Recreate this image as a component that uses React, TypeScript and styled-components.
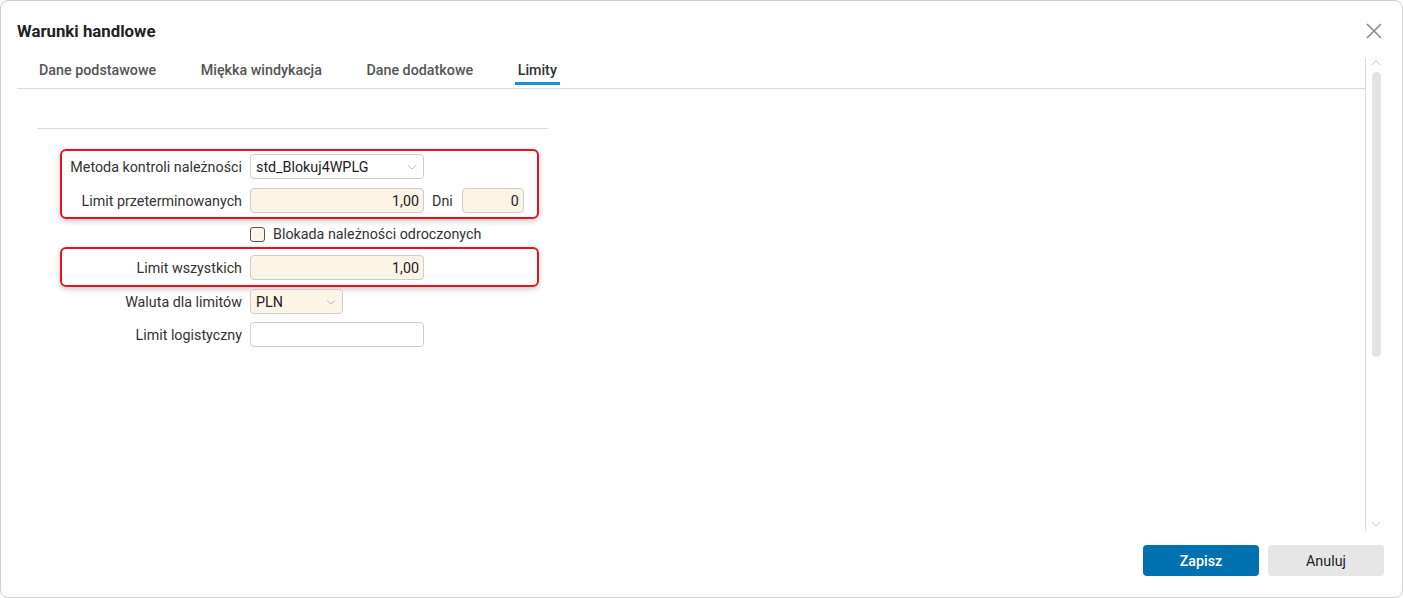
import React from "react";
import styled, { createGlobalStyle } from "styled-components";

const Global = createGlobalStyle`
  html, body { margin: 0; padding: 0; background: #ffffff; }
  body { font-family: Roboto, "Liberation Sans", Arial, sans-serif; color: #333; }
  * { box-sizing: border-box; }
`;

const Dialog = styled.div`
  width: 1403px;
  height: 598px;
  border: 1px solid #cfcfcf;
  border-radius: 8px;
  background: #fff;
  display: flex;
  flex-direction: column;
  position: relative;
`;

const Header = styled.div`
  height: 56px;
  padding: 20px 16px 0 16px;
  display: flex;
  justify-content: space-between;
  align-items: flex-start;
`;

const Title = styled.h1`
  margin: 0;
  font-size: 16.8px;
  line-height: 20px;
  font-weight: 700;
  color: #222;
`;

const CloseButton = styled.button`
  border: 0;
  background: none;
  padding: 0;
  margin: 1px 3px 0 0;
  width: 18px;
  height: 18px;
  cursor: pointer;
  display: flex;
  align-items: center;
  justify-content: center;
`;

const Middle = styled.div`
  flex: 1;
  display: flex;
  margin: 0 16px 0 16px;
  min-height: 0;
`;

const Content = styled.div`
  flex: 1;
  display: flex;
  flex-direction: column;
`;

const TabBar = styled.div`
  height: 32px;
  border-bottom: 1px solid #dcdcdc;
  display: flex;
  align-items: stretch;
  padding-left: 19px;
`;

const Tab = styled.div<{ $active?: boolean }>`
  margin-right: 38.5px;
  padding: 5px 3px 0 3px;
  font-size: 14.3px;
  line-height: 17px;
  font-weight: 500;
  color: ${(p) => (p.$active ? "#333" : "#555")};
  position: relative;
  white-space: nowrap;
  &::after {
    content: "";
    position: absolute;
    left: 0;
    right: 0;
    bottom: 3px;
    height: 3px;
    background: ${(p) => (p.$active ? "#1a8fd6" : "transparent")};
  }
`;

const Body = styled.div`
  padding: 39px 0 0 20px;
`;

const Separator = styled.div`
  width: 511px;
  height: 1px;
  background: #dcdcdc;
  margin-bottom: 20px;
`;

const Form = styled.div`
  margin-left: 23px;
  display: flex;
  flex-direction: column;
`;

const Highlight = styled.div<{ $pad: string; $mb: number }>`
  width: 479px;
  border: 2px solid #e8121b;
  border-radius: 6px;
  box-shadow: 0 2px 6px rgba(0, 0, 0, 0.22);
  padding: ${(p) => p.$pad};
  display: flex;
  flex-direction: column;
  gap: 9px;
  margin-bottom: ${(p) => p.$mb}px;
`;

const Row = styled.div<{ $mb?: number; $inset?: boolean }>`
  display: flex;
  align-items: center;
  gap: 8px;
  height: 25px;
  margin-bottom: ${(p) => p.$mb ?? 0}px;
  padding-left: ${(p) => (p.$inset ? 0 : 2)}px;
`;

const Label = styled.span`
  width: 180px;
  text-align: right;
  font-size: 14.3px;
  color: #333;
  white-space: nowrap;
`;

const Field = styled.div<{ $w: number; $beige?: boolean; $right?: boolean }>`
  width: ${(p) => p.$w}px;
  height: 25px;
  border: 1px solid #cdcdcd;
  border-radius: 4px;
  background: ${(p) => (p.$beige ? "#fcf4e6" : "#fff")};
  display: flex;
  align-items: center;
  justify-content: ${(p) => (p.$right ? "flex-end" : "space-between")};
  padding: 0 4px 0 5px;
  font-size: 14.3px;
  color: #222;
`;

const Chevron = styled.svg`
  width: 10px;
  height: 10px;
  margin-right: 2px;
`;

const SmallLabel = styled.span`
  font-size: 14.3px;
  color: #333;
  margin: 0 1px 0 0;
`;

const CheckRow = styled.label`
  display: flex;
  align-items: center;
  gap: 8px;
  height: 16px;
  margin: 7px 0 5px 190px;
  font-size: 14.3px;
  color: #333;
  white-space: nowrap;
`;

const Box = styled.span`
  width: 15px;
  height: 15px;
  border: 1px solid #555;
  border-radius: 3px;
  background: #fcf4e6;
`;

const ScrollCol = styled.div`
  width: 21px;
  height: 473px;
  margin-top: 1px;
  border-left: 1px solid #dcdcdc;
  position: relative;
  display: flex;
  flex-direction: column;
  align-items: center;
`;

const ArrowIcon = styled.svg`
  width: 10px;
  height: 6px;
`;

const Thumb = styled.div`
  width: 9px;
  height: 285px;
  border-radius: 5px;
  background: #e3e3e3;
  margin: 6px 0 0 0;
`;

const Spacer = styled.div`
  flex: 1;
`;

const Footer = styled.div`
  height: 69px;
  display: flex;
  justify-content: flex-end;
  align-items: flex-start;
  gap: 9px;
  padding: 17px 18px 0 0;
`;

const Button = styled.button<{ $primary?: boolean }>`
  width: 116px;
  height: 31px;
  border: 0;
  border-radius: 4px;
  font-family: inherit;
  font-size: 14.3px;
  font-weight: ${(p) => (p.$primary ? 500 : 400)};
  background: ${(p) => (p.$primary ? "#0071b0" : "#e6e6e6")};
  color: ${(p) => (p.$primary ? "#fff" : "#222")};
`;

const Down = () => (
  <Chevron viewBox="0 0 10 10">
    <path d="M1 3.5 L5 7 L9 3.5" fill="none" stroke="#bbb" strokeWidth="1" />
  </Chevron>
);

export default function App() {
  return (
    <>
      <Global />
      <Dialog>
        <Header>
          <Title>Warunki handlowe</Title>
          <CloseButton aria-label="close">
            <svg width="16" height="16" viewBox="0 0 16 16">
              <path d="M1 1 L15 15 M15 1 L1 15" stroke="#8a8a8a" strokeWidth="1.6" fill="none" />
            </svg>
          </CloseButton>
        </Header>
        <Middle>
          <Content>
            <TabBar>
              <Tab>Dane podstawowe</Tab>
              <Tab>Miękka windykacja</Tab>
              <Tab>Dane dodatkowe</Tab>
              <Tab $active>Limity</Tab>
            </TabBar>
            <Body>
              <Separator />
              <Form>
                <Highlight $pad="3px 0 4px 0" $mb={0}>
                  <Row $inset>
                    <Label>Metoda kontroli należności</Label>
                    <Field $w={174}>
                      <span>std_Blokuj4WPLG</span>
                      <Down />
                    </Field>
                  </Row>
                  <Row $inset>
                    <Label>Limit przeterminowanych</Label>
                    <Field $w={174} $beige $right>1,00</Field>
                    <SmallLabel>Dni</SmallLabel>
                    <Field $w={62} $beige $right>0</Field>
                  </Row>
                </Highlight>
                <CheckRow>
                  <Box />
                  Blokada należności odroczonych
                </CheckRow>
                <Highlight $pad="6px 0 5px 0" $mb={2}>
                  <Row $inset>
                    <Label>Limit wszystkich</Label>
                    <Field $w={174} $beige $right>1,00</Field>
                  </Row>
                </Highlight>
                <Row $mb={8}>
                  <Label>Waluta dla limitów</Label>
                  <Field $w={93} $beige>
                    <span>PLN</span>
                    <Down />
                  </Field>
                </Row>
                <Row>
                  <Label>Limit logistyczny</Label>
                  <Field $w={174} />
                </Row>
              </Form>
            </Body>
          </Content>
          <ScrollCol>
            <ArrowIcon viewBox="0 0 10 6" style={{ marginTop: 2 }}>
              <path d="M1 5 L5 1 L9 5" fill="none" stroke="#c8c8c8" strokeWidth="1" />
            </ArrowIcon>
            <Thumb />
            <Spacer />
            <ArrowIcon viewBox="0 0 10 6" style={{ marginBottom: 4 }}>
              <path d="M1 1 L5 5 L9 1" fill="none" stroke="#c8c8c8" strokeWidth="1" />
            </ArrowIcon>
          </ScrollCol>
        </Middle>
        <Footer>
          <Button $primary>Zapisz</Button>
          <Button>Anuluj</Button>
        </Footer>
      </Dialog>
    </>
  );
}
